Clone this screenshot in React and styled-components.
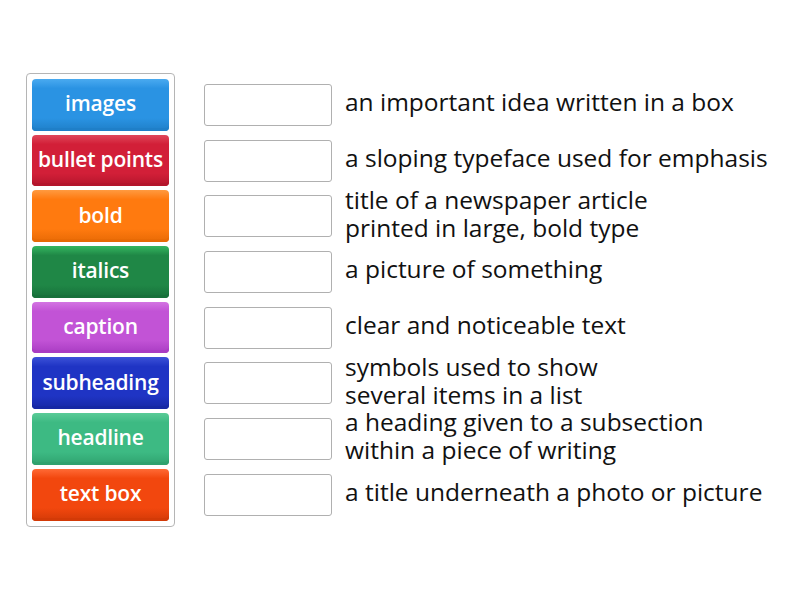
import React from "react";
import styled, { createGlobalStyle } from "styled-components";

const Global = createGlobalStyle`
  html, body { margin: 0; padding: 0; background: #fff; }
  body { font-family: "Open Sans", "Noto Sans", sans-serif; }
`;

const Page = styled.div`
  display: flex;
  align-items: flex-start;
  padding: 73px 0 0 26px;
  gap: 29px;
`;

const Panel = styled.div`
  display: flex;
  flex-direction: column;
  gap: 4px;
  padding: 5px;
  border: 1px solid #b5b5b5;
  border-radius: 4px;
  width: 137px;
`;

const Tile = styled.div`
  height: 51.7px;
  box-sizing: border-box;
  display: flex;
  align-items: center;
  justify-content: center;
  padding-bottom: 3px;
  border-radius: 4px;
  color: #fff;
  font-size: 21px;
  font-weight: 600;
  letter-spacing: -0.2px;
  white-space: nowrap;
  background: linear-gradient(to bottom, ${(p) => p.$light} 0%, ${(p) => p.$c} 18%, ${(p) => p.$c} 75%, ${(p) => p.$dark} 100%);
  box-shadow: inset 0 -3px 0 ${(p) => p.$dark};
`;

const Rows = styled.div`
  display: flex;
  flex-direction: column;
  gap: 4px;
  padding-top: 6px;
`;

const Row = styled.div`
  height: 51.7px;
  display: flex;
  align-items: center;
  gap: 13px;
`;

const Slot = styled.div`
  width: 128px;
  height: 42px;
  box-sizing: border-box;
  border: 1px solid #b0b0b0;
  border-radius: 3px;
  background: #fff;
  flex-shrink: 0;
`;

const Clue = styled.div`
  font-size: 24.5px;
  line-height: 28px;
  color: #111;
  white-space: pre-line;
  margin-top: -5px;
`;

const items = [
  { label: "images", c: "#2a93e3", light: "#4aaaf0", dark: "#1f7fc8" },
  { label: "bullet points", c: "#d21f38", light: "#e0475a", dark: "#b4152c" },
  { label: "bold", c: "#ff7a0f", light: "#ff9a40", dark: "#e86a05" },
  { label: "italics", c: "#1f8746", light: "#35b760", dark: "#17703a" },
  { label: "caption", c: "#c253d6", light: "#d374e2", dark: "#a93cc3" },
  { label: "subheading", c: "#1f34c4", light: "#3c52d8", dark: "#1628a4" },
  { label: "headline", c: "#3dba83", light: "#5acb97", dark: "#2fa26f" },
  { label: "text box", c: "#f2470e", light: "#ff6a35", dark: "#d33a07" },
];

const clues = [
  "an important idea written in a box",
  "a sloping typeface used for emphasis",
  "title of a newspaper article\nprinted in large, bold type",
  "a picture of something",
  "clear and noticeable text",
  "symbols used to show\nseveral items in a list",
  "a heading given to a subsection\nwithin a piece of writing",
  "a title underneath a photo or picture",
];

export default function App() {
  return (
    <>
      <Global />
      <Page>
        <Panel>
          {items.map((it) => (
            <Tile key={it.label} $c={it.c} $light={it.light} $dark={it.dark}>
              {it.label}
            </Tile>
          ))}
        </Panel>
        <Rows>
          {clues.map((t) => (
            <Row key={t}>
              <Slot />
              <Clue>{t}</Clue>
            </Row>
          ))}
        </Rows>
      </Page>
    </>
  );
}
